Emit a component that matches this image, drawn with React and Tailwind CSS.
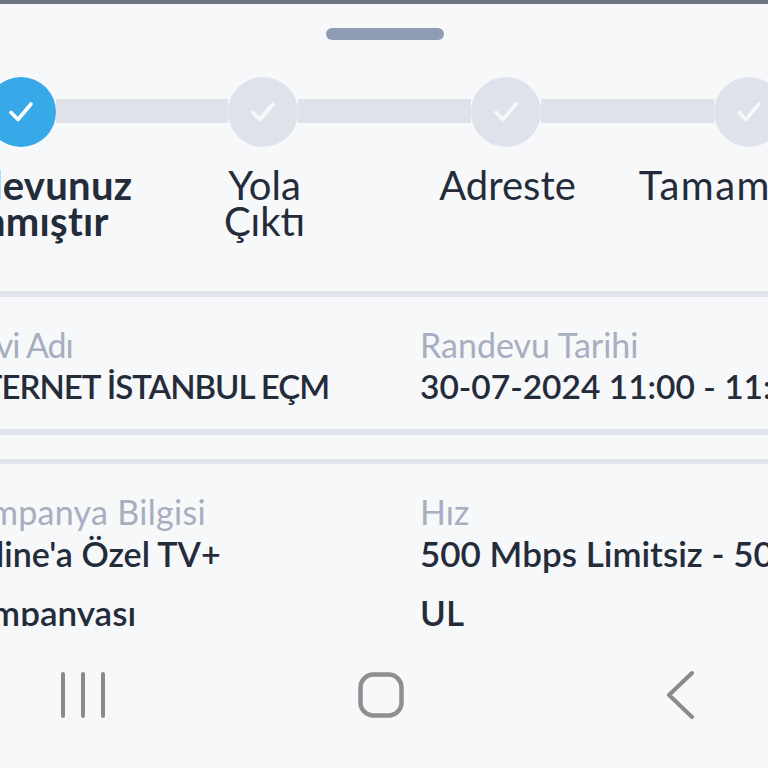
import React from "react";

function Check() {
  return (
    <svg width="26" height="22" viewBox="0 0 26 22" fill="none">
      <path d="M3 11.5 L10 18.5 L23 3" stroke="currentColor" strokeWidth="3.6" strokeLinecap="round" strokeLinejoin="round" />
    </svg>
  );
}

function Dot({ active }) {
  return (
    <div className={`w-[70px] h-[70px] shrink-0 rounded-full flex items-center justify-center ${active ? "bg-[#37a9e8] text-white" : "bg-[#dfe2ea] text-[#f7f8fa]"}`}>
      <Check />
    </div>
  );
}

function Field({ label, labelClass = "", lines, className = "" }) {
  return (
    <div className={`flex flex-col gap-[11px] ${className}`}>
      <div className="flex flex-col">
        <div className={`text-[34px] leading-[36px] text-[#a7aec0] whitespace-nowrap ${labelClass}`}>{label}</div>
        <div className={`leading-[47px] font-semibold text-[#242c3a] whitespace-nowrap ${lines[0].c}`}>{lines[0].t}</div>
      </div>
      {lines[1] && (
        <div className={`leading-[48px] font-semibold text-[#242c3a] whitespace-nowrap ${lines[1].c}`}>{lines[1].t}</div>
      )}
    </div>
  );
}

export default function App() {
  return (
    <div className="w-[768px] h-[768px] overflow-hidden bg-[#f7f8fa] flex flex-col font-['Lato',sans-serif]">
      <div className="h-[4px] shrink-0 bg-[#6f7585]" />
      <div className="flex justify-center pt-[24px] shrink-0">
        <div className="w-[118px] h-[12px] ml-[2px] rounded-full bg-[#8f9cb5]" />
      </div>
      <div className="flex items-center ml-[-14px] mt-[37px] shrink-0">
        <Dot active />
        <div className="w-[172px] h-[24px] mb-[2px] shrink-0 bg-[#dfe2ea]" />
        <Dot />
        <div className="w-[173px] h-[24px] mb-[2px] shrink-0 bg-[#dfe2ea]" />
        <Dot />
        <div className="w-[173px] h-[24px] mb-[2px] shrink-0 bg-[#dfe2ea]" />
        <Dot />
      </div>
      <div className="flex ml-[-100px] mt-[20px] h-[124px] shrink-0 text-[40px] leading-[36px] text-[#242c3a] text-center">
        <div className="w-[243px] shrink-0 font-bold tracking-[0.3px]">Randevunuz Alınmıştır</div>
        <div className="w-[243px] shrink-0 px-[70px]">Yola Çıktı</div>
        <div className="w-[243px] shrink-0">Adreste</div>
        <div className="w-[243px] shrink-0 whitespace-nowrap tracking-[1.5px]">Tamamlandı</div>
      </div>
      <div className="h-[6px] shrink-0 bg-[#e2e5ec]" />
      <div className="h-[132px] shrink-0 flex ml-[-50px] pt-[30px]">
        <Field
          className="w-[470px] shrink-0"
          label="Servi Adı"
          labelClass="tracking-[-1px]"
          lines={[{ t: "İNTERNET İSTANBUL EÇM", c: "text-[33px] tracking-[-1px]" }]}
        />
        <Field label="Randevu Tarihi" lines={[{ t: "30-07-2024 11:00 - 11:30", c: "text-[33.5px]" }]} />
      </div>
      <div className="h-[6px] shrink-0 bg-[#e2e5ec]" />
      <div className="h-[24px] shrink-0" />
      <div className="h-[5px] shrink-0 bg-[#e2e5ec]" />
      <div className="h-[162px] shrink-0 overflow-hidden flex ml-[-50px] pt-[30px]">
        <Field
          className="w-[470px] shrink-0"
          label="Kampanya Bilgisi"
          labelClass="tracking-[0.3px]"
          lines={[
            { t: "Online'a Özel TV+", c: "text-[34px]" },
            { t: "Kampanyası", c: "text-[35px]" },
          ]}
        />
        <Field
          label="Hız"
          lines={[
            { t: "500 Mbps Limitsiz - 50 Mbps", c: "text-[35px]" },
            { t: "UL", c: "text-[35px]" },
          ]}
        />
      </div>
      <div className="flex-1 flex items-start justify-between pl-[60px] pr-[74px] pt-[44px]">
        <svg width="46" height="50" viewBox="0 0 46 50" fill="none" stroke="#8a8a8d" strokeWidth="4" strokeLinecap="round">
          <path d="M3 4V46M23 4V46M43 4V46" />
        </svg>
        <svg width="46" height="48" viewBox="0 0 46 48" fill="none" stroke="#8f8f92" strokeWidth="4.5" className="mr-[10px] mt-[2px]">
          <rect x="2.5" y="2.5" width="41" height="41" rx="13" />
        </svg>
        <svg width="28" height="50" viewBox="0 0 28 50" fill="none" stroke="#8a8a8d" strokeWidth="4" strokeLinecap="round" strokeLinejoin="round">
          <path d="M26 3 L3 25 L26 47" />
        </svg>
      </div>
    </div>
  );
}
